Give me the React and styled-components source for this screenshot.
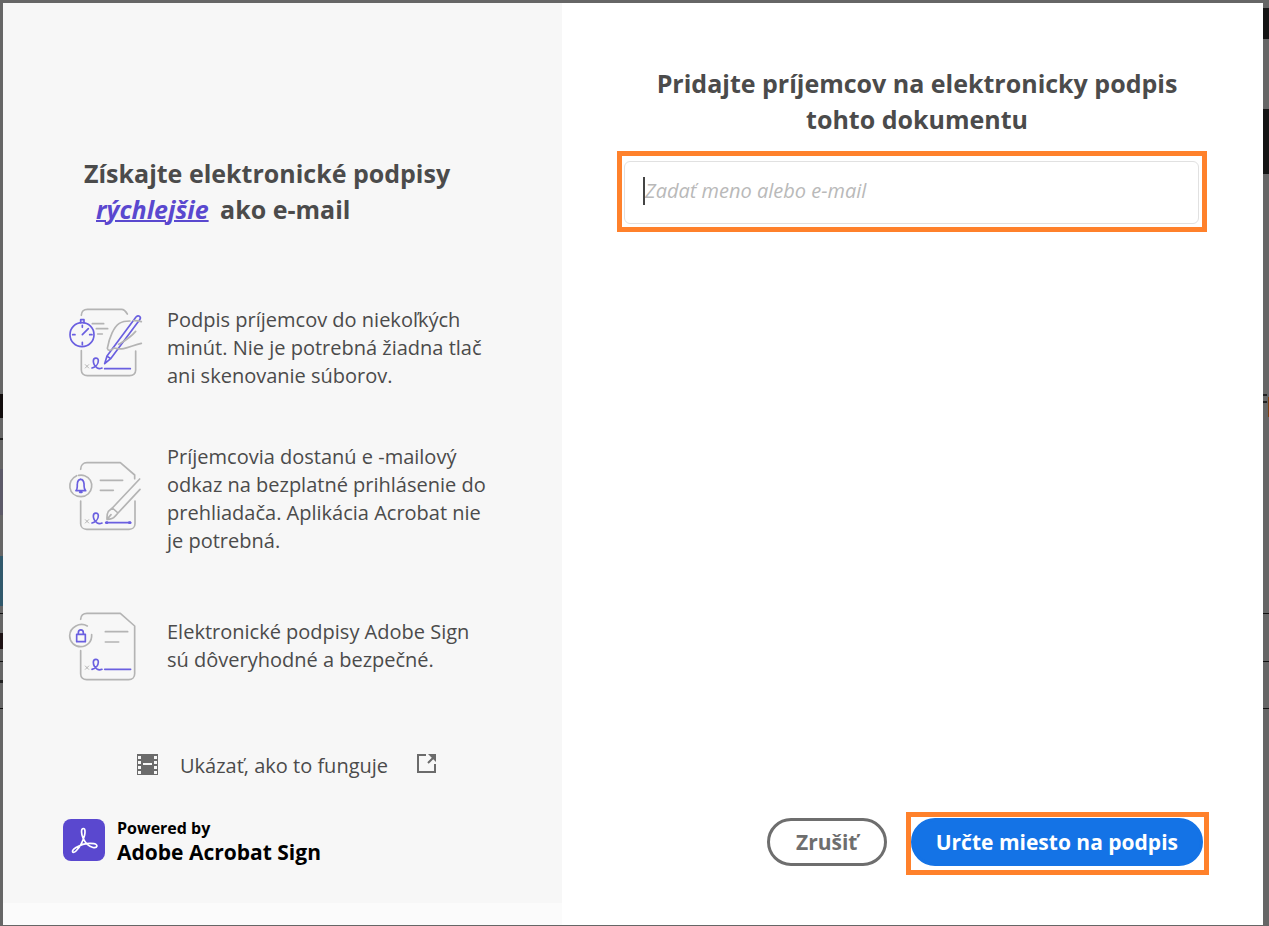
import React, { useState } from "react";
import styled, { createGlobalStyle } from "styled-components";

const GlobalStyle = createGlobalStyle`
  * {
    box-sizing: border-box;
  }
  body {
    margin: 0;
    background: #666;
    color: #4b4b4b;
    font-family: "Open Sans", "Noto Sans", sans-serif;
  }
`;

const Backdrop = styled.div`
  min-height: 100vh;
  display: grid;
  grid-template-columns: 3px 1fr 6px;
  padding: 3px 0 1px;
  background: #666;
`;

// slivers of the page that stay visible beside the dialog
const LeftEdge = styled.div`
  background: linear-gradient(#120d0d, #120d0d) 0 391px / 3px 24px no-repeat,
    linear-gradient(#222, #222) 0 435px / 3px 2px no-repeat,
    linear-gradient(#5d5a69, #5d5a69) 0 466px / 3px 46px no-repeat,
    linear-gradient(#31596c, #31596c) 0 553px / 3px 50px no-repeat,
    linear-gradient(#111, #111) 0 610px / 3px 1px no-repeat,
    linear-gradient(#1d1214, #1d1214) 0 630px / 3px 16px no-repeat,
    linear-gradient(#111, #111) 0 658px / 3px 1px no-repeat,
    linear-gradient(#222, #222) 0 677px / 3px 3px no-repeat,
    linear-gradient(#111, #111) 0 705px / 3px 1px no-repeat;
`;

const RightEdge = styled.div`
  background: linear-gradient(#151515, #151515) 0 5px / 6px 31px no-repeat,
    linear-gradient(#151515, #151515) 0 106px / 6px 65px no-repeat,
    linear-gradient(#222, #222) 0 391px / 4px 2px no-repeat,
    linear-gradient(#222, #222) 0 398px / 4px 2px no-repeat,
    linear-gradient(#7a3f12, #7a3f12) 5px 394px / 1px 20px no-repeat,
    linear-gradient(#111, #111) 0 610px / 6px 1px no-repeat,
    linear-gradient(#111, #111) 0 658px / 6px 1px no-repeat,
    linear-gradient(#111, #111) 0 705px / 6px 1px no-repeat;
`;

const Dialog = styled.main`
  display: grid;
  grid-template-columns: 559fr 701fr;
  background: #fff;
`;

const InfoPanel = styled.section`
  display: flex;
  flex-direction: column;
  padding-bottom: 22px;
  background: #fbfbfb;
`;

const InfoContent = styled.div`
  flex: 1;
  padding: 152px 60px 36px;
  background: #f7f7f7;
`;

const Title = styled.h1`
  margin: 0;
  font-size: 25px;
  line-height: 36px;
  font-weight: 700;
`;

const InfoTitle = styled(Title)`
  padding-left: 21px;
`;

const FormTitle = styled(Title)`
  padding-left: 8px;
  text-align: center;
`;

const Highlight = styled.em`
  margin: 0 5px 0 12px;
  color: #5a48cf;
  text-decoration: underline;
  text-decoration-thickness: 2px;
`;

const Features = styled.ul`
  display: flex;
  flex-direction: column;
  gap: 53px;
  margin: 79px 0 0;
  padding: 0 0 0 2px;
  list-style: none;
`;

const Feature = styled.li`
  display: flex;
  align-items: center;
  gap: 22px;
`;

const FeatureIcon = styled.svg`
  flex: none;
  width: 80px;
  height: 76px;
  overflow: visible;
  fill: none;
  stroke: #b4b4b4;
  stroke-width: 5;
  stroke-linecap: round;
  stroke-linejoin: round;

  .accent {
    stroke: #6a5fe0;
  }
`;

const FeatureText = styled.p`
  margin: 0;
  max-width: 326px;
  font-size: 20px;
  line-height: 28px;
`;

const HowLink = styled.a`
  display: flex;
  width: fit-content;
  margin: 68px 0 0 74px;
  color: #4b4b4b;
  font-size: 20px;
  line-height: 28px;
  text-decoration: none;

  svg {
    margin-top: 2px;
  }
  span {
    margin: 0 29px 0 22px;
  }
`;

const Brand = styled.div`
  display: flex;
  align-items: center;
  gap: 12px;
  margin-top: 36px;
  color: #000;
  font-weight: 700;
`;

const BrandText = styled.div`
  font-size: ${(props) => (props.$large ? 21 : 16)}px;
  line-height: 24px;
`;

const FormPanel = styled.form`
  display: flex;
  flex-direction: column;
  padding: 62px 54px 50px 55px;
`;

const FieldFrame = styled.div`
  margin: 14px 2px 0 0;
  padding: 5px 3px 3px 2px;
  border: 5px solid #ff812b;
`;

const Field = styled.label`
  display: flex;
  align-items: center;
  height: 63px;
  padding: 0 18px 3px;
  border: 1px solid #e1e1e1;
  border-radius: 6px;
`;

const Caret = styled.span`
  width: 2px;
  height: 28px;
  background: #444;
`;

const RecipientInput = styled.input`
  flex: 1;
  min-width: 0;
  padding: 0;
  border: 0;
  outline: 0;
  background: none;
  color: #4b4b4b;
  font: 20px/28px "Open Sans", "Noto Sans", sans-serif;

  &::placeholder {
    color: #b9b9b9;
    font-style: italic;
    opacity: 1;
  }
`;

const Actions = styled.div`
  display: flex;
  justify-content: flex-end;
  align-items: baseline;
  gap: 19px;
  margin-top: auto;
`;

const Button = styled.button`
  height: 48px;
  min-width: 120px;
  padding: 0 22px;
  border: 3px solid ${(props) => (props.$primary ? "#1473e6" : "#6e6e6e")};
  border-radius: 24px;
  background: ${(props) => (props.$primary ? "#1473e6" : "#fff")};
  color: ${(props) => (props.$primary ? "#fff" : "#6e6e6e")};
  font: 700 21px/28px "Open Sans", "Noto Sans", sans-serif;
  white-space: nowrap;
`;

const ButtonFrame = styled.div`
  padding: 1px 1px 4px 0;
  border: 5px solid #ff812b;
`;

function Signature() {
  return (
    <>
      <path d="M76 209l10 10M86 209l-10 10" strokeWidth="3" />
      <path className="accent" d="M96 219c12-3 19-13 19-22 0-11-15-10-15 1 0 9 6 17 12 21 5 3 9 2 14 0" />
    </>
  );
}

function FastIcon() {
  return (
    <FeatureIcon viewBox="15 45 240 228" aria-hidden="true">
      <path d="M64 61c0-11 8-18 18-18h103c7 0 11 4 17 14M64 167v58c0 10 8 17 18 17h127c11 0 18-7 18-17v-57" />
      <path d="M97 86h34M109 101h34M113 117h14" />
      <g className="accent">
        <circle cx="66" cy="119" r="36" />
        <path d="M62 83v-9h10v9M67 91v6M67 142v7M38 119h7M89 119h7M67 119l18-18" />
        <path d="M134 206l7-23 87-117c8-8 17 0 11 8l-86 116zM142 184l10 7M134 221h77" />
      </g>
      <path d="M244 80c-10-3-16-4-24-3M210 78c-12 0-24 2-32 7-16 10-30 41-36 75 2 9 13 7 20-1M176 148c18-11 33-18 51-39M163 159c30 9 51-8 81-14" />
      <Signature />
    </FeatureIcon>
  );
}

function NotifyIcon() {
  return (
    <FeatureIcon viewBox="15 33 240 228" aria-hidden="true">
      <path d="M62 58c0-12 8-20 19-20h100l43 37v11M62 153v68c0 10 8 17 18 17h127c11 0 18-7 18-17v-68" />
      <path d="M121 91h67M121 121h39M50 77c-32 14-26 62 13 63 38-1 43-52 11-63-6-2-12-2-18-1" />
      <path d="M239 87l-82 87 17 15 66-71M157 174l-12 10c-5 8-4 14-4 24 11 0 19-2 24-9l9-10M141 208l12-14" />
      <path className="accent" d="M48 122h29c-7-6-4-14-5-21-2-17-18-17-20 0-1 7 2 15-4 21zM59 127h7M62 88v-1M137 218h75" />
      <path className="accent" d="M140 218h1M208 218h2" strokeWidth="8" />
      <Signature />
    </FeatureIcon>
  );
}

function SecureIcon() {
  return (
    <FeatureIcon viewBox="15 24 240 228" aria-hidden="true">
      <path d="M62 58c0-11 8-18 19-18h100l43 38v143c0 10-7 18-18 18H80c-10 0-18-7-18-17v-70" />
      <path d="M136 95h67M136 126h40M82 78c-22-12-52 2-53 29 0 19 15 33 33 33 20 0 34-15 33-36" />
      <path className="accent" d="M50 103h26v22H50zM55 103v-5c0-11 15-11 15 0v5M134 208h78" />
      <g transform="translate(0 -11)">
        <Signature />
      </g>
    </FeatureIcon>
  );
}

function AcrobatLogo() {
  return (
    <svg width="42" height="42" viewBox="0 0 42 42" aria-hidden="true">
      <rect width="42" height="42" rx="8" fill="#5a48cf" />
      <path
        d="M20.5 9.5c-3 0-2 6-.5 9.500 2 4.500 6 8.500 10 9.500 4.500 1 5.500-3 1-3.800-6-1-13 .8-18 3.800-6 4-3 6.500 0 3.500 4-4 7-10 8.500-15.500.8-3 .8-7-1-7z"
        fill="none"
        stroke="#fff"
        strokeWidth="1.700"
      />
    </svg>
  );
}

function FilmIcon() {
  return (
    <svg width="21" height="21" viewBox="0 0 21 21" aria-hidden="true">
      <path d="M0 0h21v21H0z" fill="#6b6b6b" />
      <path
        d="M1 2h3v3H1zM1 7h3v3H1zM1 12h3v3H1zM1 17h3v3H1zM17 2h3v3h-3zM17 7h3v3h-3zM17 12h3v3h-3zM17 17h3v3h-3zM6 9h9v2H6z"
        fill="#f7f7f7"
      />
    </svg>
  );
}

function OpenIcon() {
  return (
    <svg width="20" height="20" viewBox="0 0 20 20" aria-hidden="true">
      <path d="M9 1H1v17h17v-8M11 9l6-6" fill="none" stroke="#6b6b6b" strokeWidth="2" />
      <path d="M11 0h8v8z" fill="#6b6b6b" />
    </svg>
  );
}

const features = [
  {
    Icon: FastIcon,
    text: "Podpis príjemcov do niekoľkých minút. Nie je potrebná žiadna tlač ani skenovanie súborov.",
  },
  {
    Icon: NotifyIcon,
    text: "Príjemcovia dostanú e -mailový odkaz na bezplatné prihlásenie do prehliadača. Aplikácia Acrobat nie je potrebná.",
  },
  {
    Icon: SecureIcon,
    text: "Elektronické podpisy Adobe Sign sú dôveryhodné a bezpečné.",
  },
];

export default function App() {
  const [recipient, setRecipient] = useState("");

  return (
    <>
      <GlobalStyle />
      <Backdrop>
        <LeftEdge />
        <Dialog>
          <InfoPanel>
            <InfoContent>
              <InfoTitle>
                Získajte elektronické podpisy <br />
                <Highlight>rýchlejšie</Highlight> ako e-mail
              </InfoTitle>
              <Features>
                {features.map(({ Icon, text }) => (
                  <Feature key={text}>
                    <Icon />
                    <FeatureText>{text}</FeatureText>
                  </Feature>
                ))}
              </Features>
              <HowLink href="#how">
                <FilmIcon />
                <span>Ukázať, ako to funguje</span>
                <OpenIcon />
              </HowLink>
              <Brand>
                <AcrobatLogo />
                <div>
                  <BrandText>Powered by</BrandText>
                  <BrandText $large>Adobe Acrobat Sign</BrandText>
                </div>
              </Brand>
            </InfoContent>
          </InfoPanel>
          <FormPanel onSubmit={(e) => e.preventDefault()}>
            <FormTitle as="h2">
              Pridajte príjemcov na elektronicky podpis
              <br /> tohto dokumentu
            </FormTitle>
            <FieldFrame>
              <Field>
                <Caret />
                <RecipientInput
                  aria-label="Zadať meno alebo e-mail"
                  placeholder="Zadať meno alebo e-mail"
                  value={recipient}
                  onChange={(e) => setRecipient(e.target.value)}
                />
              </Field>
            </FieldFrame>
            <Actions>
              <Button type="button">Zrušiť</Button>
              <ButtonFrame>
                <Button type="submit" $primary>Určte miesto na podpis</Button>
              </ButtonFrame>
            </Actions>
          </FormPanel>
        </Dialog>
        <RightEdge />
      </Backdrop>
    </>
  );
}
